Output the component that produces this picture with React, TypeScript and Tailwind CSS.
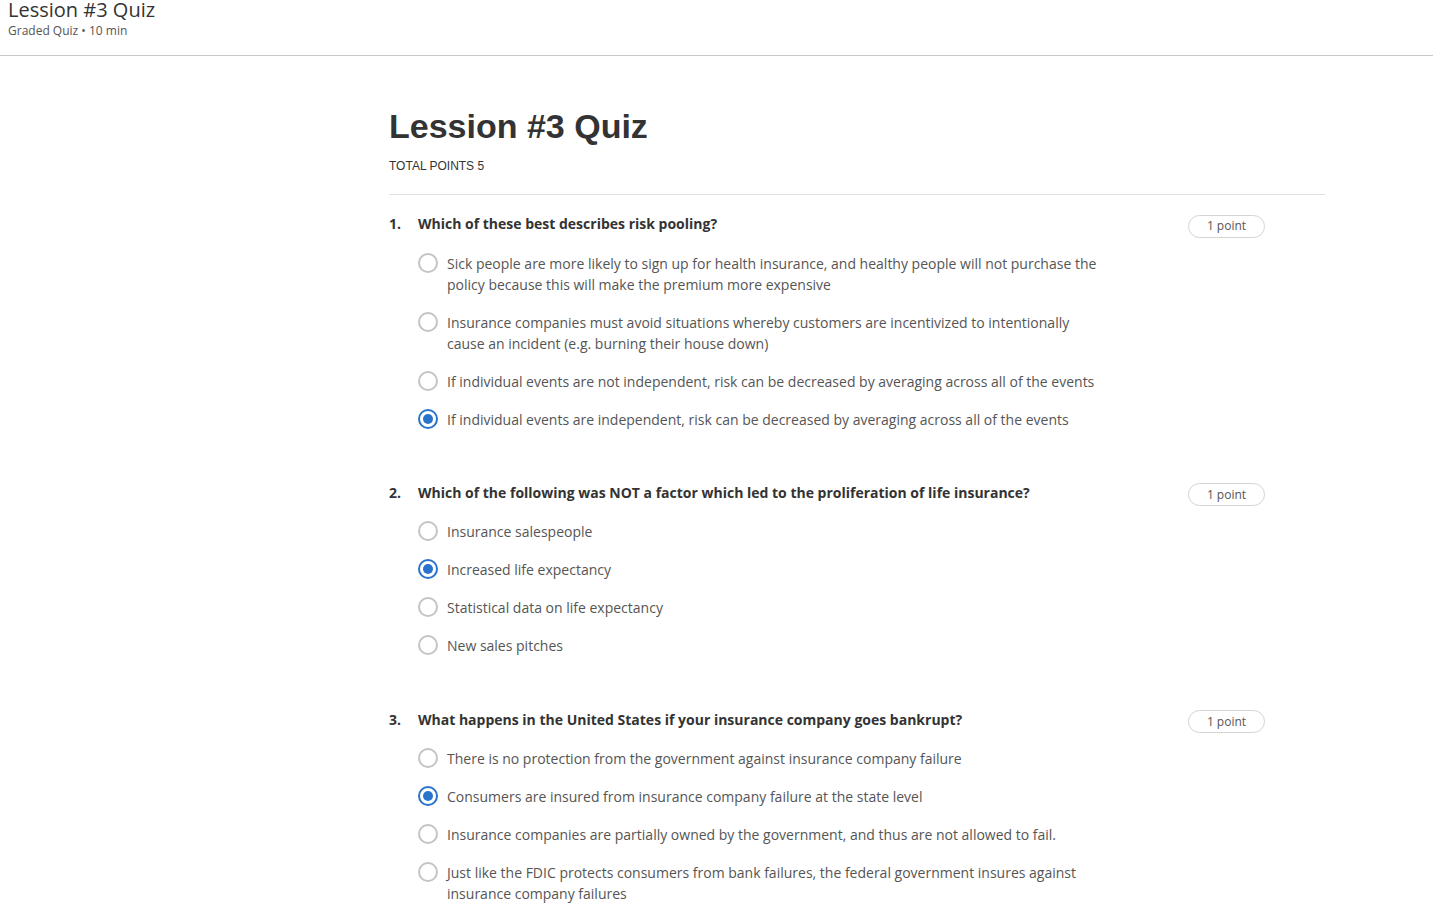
import React from "react";

type Q = {
  n: number;
  text: string;
  options: string[];
  selected: number;
  gapTop: string;
  optGap: string;
};

const questions: Q[] = [
  {
    n: 1,
    text: "Which of these best describes risk pooling?",
    options: [
      "Sick people are more likely to sign up for health insurance, and healthy people will not purchase the policy because this will make the premium more expensive",
      "Insurance companies must avoid situations whereby customers are incentivized to intentionally cause an incident (e.g. burning their house down)",
      "If individual events are not independent, risk can be decreased by averaging across all of the events",
      "If individual events are independent, risk can be decreased by averaging across all of the events",
    ],
    selected: 3,
    gapTop: "mt-[18px]",
    optGap: "mt-[18.5px]",
  },
  {
    n: 2,
    text: "Which of the following was NOT a factor which led to the proliferation of life insurance?",
    options: [
      "Insurance salespeople",
      "Increased life expectancy",
      "Statistical data on life expectancy",
      "New sales pitches",
    ],
    selected: 1,
    gapTop: "mt-[52px]",
    optGap: "mt-[18px]",
  },
  {
    n: 3,
    text: "What happens in the United States if your insurance company goes bankrupt?",
    options: [
      "There is no protection from the government against insurance company failure",
      "Consumers are insured from insurance company failure at the state level",
      "Insurance companies are partially owned by the government, and thus are not allowed to fail.",
      "Just like the FDIC protects consumers from bank failures, the federal government insures against insurance company failures",
    ],
    selected: 1,
    gapTop: "mt-[53px]",
    optGap: "mt-[18px]",
  },
];

function Radio({ checked }: { checked: boolean }) {
  return checked ? (
    <span className="mt-[0.5px] flex h-[20px] w-[20px] shrink-0 items-center justify-center rounded-full border-2 border-[#2a73cc]">
      <span className="h-[10px] w-[10px] rounded-full bg-[#2a73cc]" />
    </span>
  ) : (
    <span className="mt-[0.5px] h-[20px] w-[20px] shrink-0 rounded-full border-2 border-[#c4c4c4]" />
  );
}

function Question({ q }: { q: Q }) {
  return (
    <div className={`flex items-start ${q.gapTop}`}>
      <div className="flex flex-1 flex-col">
        <div className="flex text-[14px] font-bold leading-[21px] text-[#333]">
          <span className="w-[29px] shrink-0">{q.n}.</span>
          <span>{q.text}</span>
        </div>
        <div className={`ml-[29px] flex flex-col gap-[17px] ${q.optGap}`}>
          {q.options.map((o, i) => (
            <div key={i} className="flex items-start gap-[9px]">
              <Radio checked={i === q.selected} />
              <span className="max-w-[655px] text-[14px] leading-[21px] text-[#555]">{o}</span>
            </div>
          ))}
        </div>
      </div>
      <div className="mr-[60px] mt-[1.5px] flex h-[23px] w-[77px] items-center justify-center rounded-full border border-[#d4d4d4] text-[12px] text-[#555]">
        1 point
      </div>
    </div>
  );
}

export default function App() {
  return (
    <div className="min-h-[913px] bg-white" style={{ fontFamily: '"Open Sans", sans-serif' }}>
      <header className="h-[56px] border-b border-[#c8c8c8] pl-[8px]">
        <div className="text-[20px] leading-[20px] text-[#333]">Lession #3 Quiz</div>
        <div className="mt-[3px] text-[12px] leading-[16px] text-[#555]">Graded Quiz • 10 min</div>
      </header>
      <main className="ml-[389px] w-[936px] pb-10">
        <h1
          className="mt-[50px] text-[34px] font-bold leading-[40px] text-[#333]"
          style={{ fontFamily: '"Liberation Sans", Arial, sans-serif' }}
        >
          Lession #3 Quiz
        </h1>
        <div
          className="mt-[12px] text-[12px] leading-[16px] text-[#333]"
          style={{ fontFamily: '"Liberation Sans", Arial, sans-serif' }}
        >
          TOTAL POINTS 5
        </div>
        <div className="mt-[20px] border-t border-[#e0e0e0]" />
        <div className="flex flex-col">
          {questions.map((q) => (
            <Question key={q.n} q={q} />
          ))}
        </div>
      </main>
    </div>
  );
}
